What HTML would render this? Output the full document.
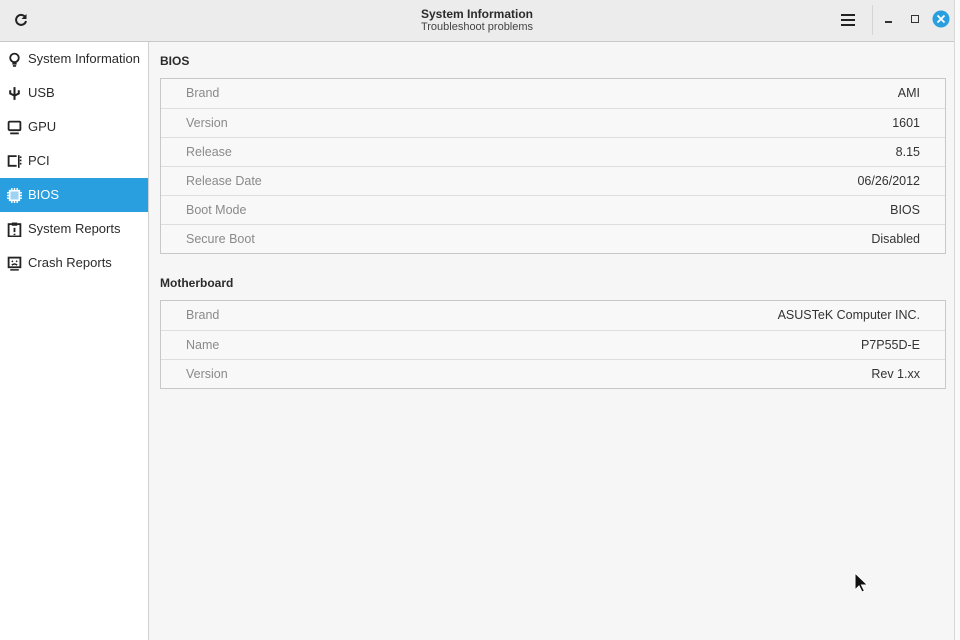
<!DOCTYPE html>
<html><head><meta charset="utf-8"><style>
*{margin:0;padding:0;box-sizing:border-box}
body{width:960px;height:640px;overflow:hidden;background:#fafafa;font-family:"Liberation Sans","DejaVu Sans",sans-serif;position:relative}
.win{position:absolute;left:0;top:0;width:955px;height:640px;background:#f6f6f6;border-right:1px solid #d8d8d8}
.hdr{position:absolute;left:0;top:0;width:954px;height:42px;background:#ececec;border-bottom:1px solid #c9c9c9}
.title{position:absolute;left:0;width:954px;top:7px;text-align:center;font-size:12px;font-weight:bold;color:#2b2b2b}
.sub{position:absolute;left:0;width:954px;top:21px;text-align:center;font-size:11px;color:#444}
.side{position:absolute;left:0;top:42px;width:149px;height:598px;background:#fff;border-right:1px solid #d0d0d0}
.it{position:absolute;left:0;width:148px;height:34px;font-size:13px;color:#2b2b2b;line-height:34px;padding-left:28px}
.it.sel{background:#2a9fdf;color:#fff}
.it svg{position:absolute;left:7px;top:10px}
h3{position:absolute;left:160px;font-size:12px;font-weight:bold;color:#2b2b2b}
.tbl{position:absolute;left:160px;width:786px;border:1px solid #c8c8c8;background:#f8f8f8}
.r{height:29px;border-top:1px solid #dedede;font-size:12.5px;line-height:28px;padding:0 25px;display:flex;justify-content:space-between}
.r:first-child{border-top:none}
.r span:first-child{color:#8a8a8a}.r span:last-child{color:#333}
</style></head><body>
<div class="win">
<div class="hdr">
<svg style="position:absolute;left:13px;top:12px" width="16" height="16" viewBox="0 0 16 16"><path d="M12.5 5.5A5 5 0 1 0 13 9" fill="none" stroke="#222" stroke-width="2"/><path d="M13.5 2v5h-5z" fill="#222"/></svg>
<div class="title">System Information</div><div class="sub">Troubleshoot problems</div>
<svg style="position:absolute;left:841px;top:13px" width="14" height="14"><rect y="1" width="14" height="2" fill="#222"/><rect y="6" width="14" height="2" fill="#222"/><rect y="11" width="14" height="2" fill="#222"/></svg>
<div style="position:absolute;left:872px;top:5px;width:1px;height:30px;background:#d4d4d4"></div>
<div style="position:absolute;left:885px;top:21px;width:7px;height:1.5px;background:#333"></div>
<div style="position:absolute;left:911px;top:15px;width:8px;height:8px;border:1.5px solid #333"></div>
<svg style="position:absolute;left:932px;top:10px" width="18" height="18"><circle cx="9" cy="9" r="8.5" fill="#2a9fdf"/><path d="M5.5 5.5l7 7M12.5 5.5l-7 7" stroke="#fff" stroke-width="1.8"/></svg>
</div>
<div class="side">
<div class="it" style="top:0"><svg width="15" height="15" viewBox="0 0 14 14"><circle cx="7" cy="5.5" r="4" fill="none" stroke="#222" stroke-width="1.7"/><path d="M5 11h4M5.5 13h3" stroke="#222" stroke-width="1.6"/></svg>System Information</div>
<div class="it" style="top:34px"><svg width="15" height="15" viewBox="0 0 14 14"><path d="M7 1v12M3 4v3l4 2 4-2V4" fill="none" stroke="#222" stroke-width="1.9"/></svg>USB</div>
<div class="it" style="top:68px"><svg width="15" height="15" viewBox="0 0 14 14"><rect x="1.5" y="1.5" width="11" height="8" rx="1" fill="none" stroke="#222" stroke-width="1.7"/><path d="M3 12.5h8" stroke="#222" stroke-width="1.7"/></svg>GPU</div>
<div class="it" style="top:102px"><svg width="15" height="15" viewBox="0 0 14 14"><path d="M9 2H1.5v9H9" fill="none" stroke="#222" stroke-width="1.7"/><path d="M11 1v12M12 3h1.5M12 6h1.5M12 9h1.5" stroke="#222" stroke-width="1.5"/></svg>PCI</div>
<div class="it sel" style="top:136px"><svg width="15" height="15" viewBox="0 0 14 14"><rect x="2.5" y="2.5" width="9" height="9" fill="#9fd3f3" stroke="#fff" stroke-width="1.5"/><path d="M0 4.5h2M0 7h2M0 9.5h2M12 4.5h2M12 7h2M12 9.5h2M4.5 0v2M7 0v2M9.5 0v2M4.5 12v2M7 12v2M9.5 12v2" stroke="#fff" stroke-width="1.3"/></svg>BIOS</div>
<div class="it" style="top:170px"><svg width="15" height="15" viewBox="0 0 14 14"><rect x="1.5" y="2" width="11" height="11.5" fill="none" stroke="#222" stroke-width="1.7"/><rect x="4.5" y="0.5" width="5" height="3" fill="#222"/><path d="M7 5.5v4M7 11v1.2" stroke="#222" stroke-width="1.7"/></svg>System Reports</div>
<div class="it" style="top:204px"><svg width="15" height="15" viewBox="0 0 14 14"><rect x="1.5" y="1.5" width="11" height="9" fill="none" stroke="#222" stroke-width="1.7"/><path d="M4.5 4.5l1 1M9.5 4.5l-1 1M4.5 8.5q2.5-2 5 0M3 13h8" stroke="#222" stroke-width="1.4" fill="none"/></svg>Crash Reports</div>
</div>
<h3 style="top:54px">BIOS</h3>
<div class="tbl" style="top:78px">
<div class="r"><span>Brand</span><span>AMI</span></div>
<div class="r"><span>Version</span><span>1601</span></div>
<div class="r"><span>Release</span><span>8.15</span></div>
<div class="r"><span>Release Date</span><span>06/26/2012</span></div>
<div class="r"><span>Boot Mode</span><span>BIOS</span></div>
<div class="r"><span>Secure Boot</span><span>Disabled</span></div>
</div>
<h3 style="top:276px">Motherboard</h3>
<div class="tbl" style="top:300px">
<div class="r"><span>Brand</span><span>ASUSTeK Computer INC.</span></div>
<div class="r"><span>Name</span><span>P7P55D-E</span></div>
<div class="r"><span>Version</span><span>Rev 1.xx</span></div>
</div>
<svg style="position:absolute;left:853px;top:572px" width="16" height="22" viewBox="0 0 16 22"><path d="M2 1v17l4-4 3 6 2.5-1-3-6h6z" fill="#111" stroke="#fff" stroke-width="1"/></svg>
</div>
</body></html>
